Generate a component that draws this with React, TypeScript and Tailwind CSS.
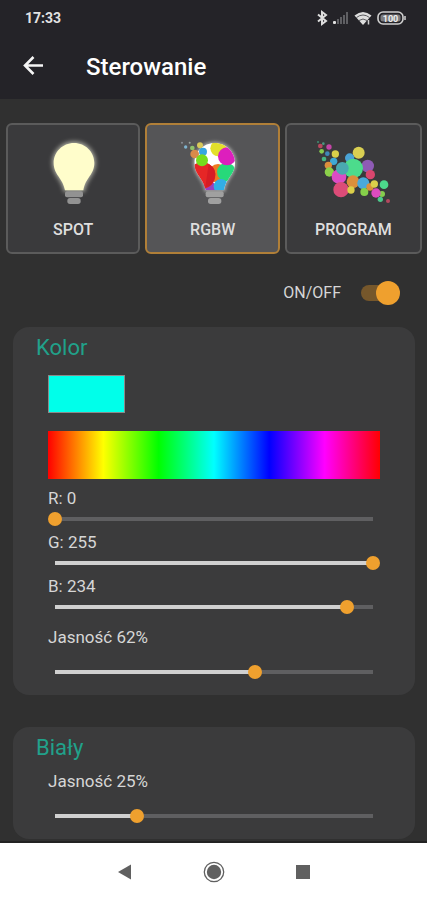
import { useState } from "react";
import type { CSSProperties, ReactNode } from "react";

type Dot = [number, number, number, string];

const BULB =
  "M222 99 C256 99 283 126 283 159 C283 195 256 202 250 241 L195 241 C188 202 161 195 161 159 C161 126 188 99 222 99 Z";

const SPRAY: Dot[] = [
  [124, 98, 3, "#8a8f96"],
  [147, 98, 3, "#9aa5a0"],
  [135, 111, 5, "#7fb4cf"],
  [155, 114, 7, "#8fc26a"],
  [178, 106, 9, "#d8c95a"],
  [162, 132, 13, "#d98a4a"],
  [187, 125, 12, "#35a6e0"],
  [184, 151, 18, "#76dc1c"],
];

const PROGRAM: Dot[] = [
  [116, 96, 3, "#3f8f72"],
  [132, 101, 4, "#4a9a80"],
  [123, 108, 7, "#b8485f"],
  [149, 111, 8, "#c445a8"],
  [127, 124, 7, "#86cc4e"],
  [144, 131, 7, "#3f88b8"],
  [168, 132, 11, "#d9cf4a"],
  [134, 147, 7, "#45b583"],
  [163, 154, 11, "#3fa9d6"],
  [147, 166, 11, "#dc8f3c"],
  [150, 186, 14, "#8bd04a"],
  [238, 128, 18, "#d9cf52"],
  [211, 144, 14, "#4aa3d6"],
  [265, 168, 19, "#8e5bb5"],
  [273, 194, 14, "#d9466e"],
  [179, 200, 22, "#dc4cc4"],
  [222, 175, 29, "#4cdc8c"],
  [189, 175, 19, "#4aa9b0"],
  [221, 215, 19, "#dc8f3c"],
  [185, 239, 23, "#dc4c78"],
  [215, 240, 11, "#dccf4a"],
  [252, 220, 18, "#4aa9dc"],
  [255, 246, 12, "#86d04a"],
  [272, 231, 11, "#dc8f3c"],
  [285, 222, 11, "#dccf4a"],
  [314, 224, 13, "#4cd98c"],
  [308, 252, 9, "#86cc4e"],
  [290, 249, 14, "#dc4cc0"],
  [303, 268, 8, "#4cc98c"],
  [326, 273, 6, "#b5485f"],
];

function Dots({ items }: { items: Dot[] }) {
  return (
    <>
      {items.map(([x, y, r, color]) => (
        <circle key={`${x}-${y}`} cx={x} cy={y} r={r} fill={color} />
      ))}
    </>
  );
}

function BulbBase({ color }: { color: string }) {
  return (
    <g fill={color}>
      <rect x="195" y="244" width="54" height="18" rx="6" />
      <rect x="202" y="264" width="40" height="18" rx="8" />
    </g>
  );
}

function SpotIcon() {
  return (
    <svg viewBox="105 75 228 216" className="h-[72px] w-[76px]" aria-hidden="true">
      <defs>
        <filter id="glow" x="-30%" y="-30%" width="160%" height="160%">
          <feGaussianBlur stdDeviation="6" />
        </filter>
      </defs>
      <path d={BULB} fill="#b9b9a8" stroke="#a0a098" strokeWidth="10" filter="url(#glow)" />
      <path d={BULB} fill="#fffdcb" />
      <BulbBase color="#929292" />
    </svg>
  );
}

function RgbwIcon() {
  return (
    <svg viewBox="103 75 228 216" className="h-[72px] w-[76px]" aria-hidden="true">
      <defs>
        <filter id="halo" x="-30%" y="-30%" width="160%" height="160%">
          <feGaussianBlur stdDeviation="5" />
        </filter>
        <clipPath id="bulb">
          <path d={BULB} />
        </clipPath>
      </defs>
      <path d={BULB} fill="#999" stroke="#999" strokeWidth="10" filter="url(#halo)" />
      <g clipPath="url(#bulb)">
        <rect x="150" y="90" width="150" height="160" fill="#ffffff" />
        <circle cx="232" cy="190" r="28" fill="#ee7a22" />
        <circle cx="257" cy="186" r="28" fill="#27d97a" />
        <circle cx="233" cy="115" r="24" fill="#e3e02c" />
        <circle cx="259" cy="139" r="27" fill="#dd1fbd" />
        <circle cx="205" cy="238" r="24" fill="#9a3fc0" />
        <circle cx="241" cy="229" r="22" fill="#32aee6" />
        <circle cx="184" cy="196" r="40" fill="#e62626" />
        <path d="M204 162 Q230 176 222 204 Q216 230 194 232 Z" fill="#d61c24" />
      </g>
      <Dots items={SPRAY} />
      <BulbBase color="#a0a0a0" />
    </svg>
  );
}

function ProgramIcon() {
  return (
    <svg viewBox="107 75 228 216" className="h-[72px] w-[76px]" aria-hidden="true">
      <Dots items={PROGRAM} />
    </svg>
  );
}

function StatusIcons() {
  return (
    <svg viewBox="0 0 92 18" className="h-[18px] w-[92px]" fill="none" aria-hidden="true">
      <path d="M1 5.500 L9 12 L5 15 V3 L9 6 L1 12.500" stroke="#dedede" strokeWidth="2" />
      <g>
        <rect x="16" y="12" width="3" height="3" rx="1" fill="#e0e0e0" />
        <rect x="20" y="10" width="2" height="5" fill="#5f5f63" />
        <rect x="23" y="8" width="2" height="7" fill="#5f5f63" />
        <rect x="26" y="6" width="2" height="9" fill="#5f5f63" />
        <rect x="29" y="3" width="2" height="12" fill="#5f5f63" />
      </g>
      <path d="M37.500 6.500 Q46 -0.500 54.500 6.500 L46 16 Z" fill="#dedede" />
      <g stroke="#4a4a4e" strokeWidth="0.900">
        <path d="M39.500 8.500 Q46 3.500 52.500 8.500" />
        <path d="M42 11.500 Q46 8.500 50 11.500" />
      </g>
      <path d="M51.500 11 V15.500" stroke="#cfcfcf" strokeWidth="1.500" />
      <rect x="61" y="3" width="25" height="12" rx="5" stroke="#d0d0d0" strokeWidth="1.600" />
      <rect x="63.500" y="5.500" width="20" height="7" rx="2.500" fill="#7b7b7e" />
      <path d="M88 7 V11" stroke="#d0d0d0" strokeWidth="1.500" />
      <text x="73.500" y="12.500" textAnchor="middle" fontSize="9" fontWeight="700" fill="#f0f0f0">
        100
      </text>
    </svg>
  );
}

function ModeCard({
  label,
  active,
  onSelect,
  children,
}: {
  label: string;
  active: boolean;
  onSelect: () => void;
  children: ReactNode;
}) {
  return (
    <button
      type="button"
      aria-pressed={active}
      onClick={onSelect}
      className={`flex h-[131px] flex-col items-center rounded-md border-2 pt-2.5 ${
        active ? "border-[#b07f38] bg-[#555557]" : "border-[#5b5b5b] bg-[#3a3a3c]"
      }`}
    >
      {children}
      <span className="mt-[11px] text-[16px] leading-6 font-medium text-[#dedede]">{label}</span>
    </button>
  );
}

function Slider({
  id,
  label,
  initial,
  percent = false,
}: {
  id: string;
  label: string;
  initial: number;
  percent?: boolean;
}) {
  const [value, setValue] = useState(initial);
  const share = (value / 255) * 100;
  return (
    <div className={`flex flex-col ${percent ? "gap-4" : "gap-0.5"}`}>
      <label htmlFor={id} className="text-[17px] leading-6 text-[#d6d6d6]">
        {label} {percent ? `${Math.floor(share)}%` : value}
      </label>
      <input
        id={id}
        type="range"
        min={0}
        max={255}
        value={value}
        onChange={(e) => setValue(Number(e.target.value))}
        style={{ "--fill": `${share}%` } as CSSProperties}
        className="block h-3.5 w-full appearance-none bg-[linear-gradient(to_right,#d0d0d0_var(--fill),#5f5f61_var(--fill))] bg-[length:calc(100%-14px)_4px] bg-center bg-no-repeat [&::-webkit-slider-thumb]:size-3.5 [&::-webkit-slider-thumb]:appearance-none [&::-webkit-slider-thumb]:rounded-full [&::-webkit-slider-thumb]:bg-[#efa02e]"
      />
    </div>
  );
}

function Panel({ title, children }: { title: string; children: ReactNode }) {
  return (
    <section className="rounded-2xl bg-[#3b3b3c] px-[35px] pt-1.5 pb-4">
      <h2 className="-ml-3 text-[22px] leading-[30px] text-[#21a18a]">{title}</h2>
      {children}
    </section>
  );
}

export default function App() {
  const [mode, setMode] = useState("RGBW");
  const [on, setOn] = useState(true);

  return (
    <div className="flex min-h-screen flex-col bg-[#303030] font-[Roboto,sans-serif]">
      <header className="bg-[#242328] pb-[13px] text-white">
        <div className="flex h-9 items-center justify-between pr-[18px] pl-[25px]">
          <time className="text-[14px] font-bold text-[#e2e2e2]">17:33</time>
          <StatusIcons />
        </div>
        <div className="flex h-[50px] items-center pt-3 pl-[21px]">
          <button type="button" aria-label="Wstecz" className="flex size-6 items-center justify-center">
            <svg viewBox="0 0 24 24" className="size-6" fill="none" stroke="#f5f5f5" strokeWidth="2.600" aria-hidden="true">
              <path d="M22 10.500 H4 M12.500 2 L4 10.500 L12.500 19" />
            </svg>
          </button>
          <h1 className="ml-[41px] text-[24px] leading-8 font-medium">Sterowanie</h1>
        </div>
      </header>

      <main className="flex flex-col">
        <div className="grid grid-cols-[1fr_1fr_1.02fr] gap-[5px] pt-6 pr-[5px] pl-1.5">
          <ModeCard label="SPOT" active={mode === "SPOT"} onSelect={() => setMode("SPOT")}>
            <SpotIcon />
          </ModeCard>
          <ModeCard label="RGBW" active={mode === "RGBW"} onSelect={() => setMode("RGBW")}>
            <RgbwIcon />
          </ModeCard>
          <ModeCard label="PROGRAM" active={mode === "PROGRAM"} onSelect={() => setMode("PROGRAM")}>
            <ProgramIcon />
          </ModeCard>
        </div>

        <label className="mt-[27px] flex h-6 items-center justify-end gap-5 pr-[27px] text-[16px] text-[#d6d6d6]">
          ON/OFF
          <span className="grid h-6 w-[39px] items-center">
            <input
              type="checkbox"
              role="switch"
              checked={on}
              onChange={(e) => setOn(e.target.checked)}
              className="peer col-start-1 row-start-1 h-4 w-[35px] appearance-none rounded-full bg-[#555] checked:bg-[#76572b]"
            />
            <span className="pointer-events-none col-start-1 row-start-1 size-6 justify-self-start rounded-full bg-[#bbb] peer-checked:justify-self-end peer-checked:bg-[#efa02e]" />
          </span>
        </label>

        <div className="flex flex-col gap-8 px-3 pt-[22px] pb-0.5 pl-[13px]">
          <Panel title="Kolor">
            <div className="mt-3 h-[38px] w-[77px] border border-[#8a8a8a] bg-[#00ffea]" />
            <div className="mt-[18px] h-12 bg-[linear-gradient(to_right,#f00,#ff0,#0f0,#0ff,#00f,#f0f,#f00)]" />
            <div className="mt-[7px] flex flex-col gap-1">
              <Slider id="red" label="R:" initial={0} />
              <Slider id="green" label="G:" initial={255} />
              <Slider id="blue" label="B:" initial={234} />
            </div>
            <div className="mt-[11px]">
              <Slider id="color-brightness" label="Jasność" initial={160} percent />
            </div>
          </Panel>
          <Panel title="Biały">
            <div className="mt-1.5">
              <Slider id="white-brightness" label="Jasność" initial={66} percent />
            </div>
          </Panel>
        </div>
      </main>

      <nav className="mt-auto flex h-[59px] items-center justify-center gap-[49px] border-t-2 border-[#222] bg-white">
        <button type="button" aria-label="Wstecz" className="flex size-10 items-center justify-center">
          <svg viewBox="0 0 20 20" className="size-5" aria-hidden="true">
            <path d="M3 10 L16 2.500 V17.500 Z" fill="#606060" />
          </svg>
        </button>
        <button type="button" aria-label="Ekran główny" className="flex size-10 items-center justify-center">
          <svg viewBox="0 0 24 24" className="size-6" aria-hidden="true">
            <circle cx="12" cy="12" r="9.700" fill="none" stroke="#606060" strokeWidth="1.300" />
            <circle cx="12" cy="12" r="7.200" fill="#606060" />
          </svg>
        </button>
        <button type="button" aria-label="Ostatnie" className="flex size-10 items-center justify-center">
          <span className="size-3.5 bg-[#606060]" />
        </button>
      </nav>
    </div>
  );
}
